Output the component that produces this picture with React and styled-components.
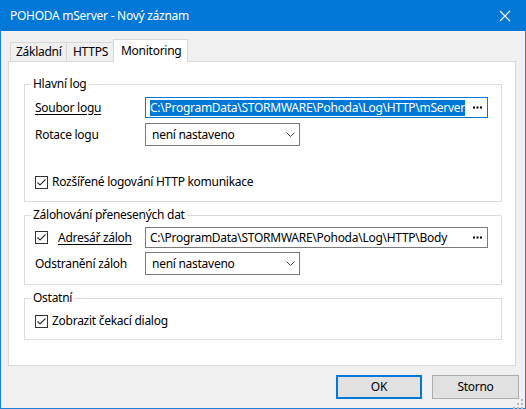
import React from "react";
import styled, { createGlobalStyle } from "styled-components";

const GlobalStyle = createGlobalStyle`
  html, body {
    margin: 0;
    padding: 0;
    background: #ffffff;
  }
  body {
    font-family: "Noto Sans", "Open Sans", sans-serif;
    font-size: 12px;
    letter-spacing: -0.27px;
    color: #000;
  }
  * {
    box-sizing: border-box;
  }
`;

const Window = styled.div`
  width: 526px;
  height: 409px;
  display: flex;
  flex-direction: column;
  position: relative;
`;

const TitleBar = styled.div`
  height: 31px;
  flex: 0 0 31px;
  background: #0078d7;
  color: #fff;
  display: flex;
  align-items: center;
  justify-content: space-between;
  padding: 1px 10px 0 10px;
`;

const Title = styled.span`
  font-size: 12px;
  line-height: 16px;
`;

const CloseIcon = () => (
  <svg width="12" height="12" viewBox="0 0 12 12" style={{ marginRight: 5 }}>
    <path d="M1 1 L11 11 M11 1 L1 11" stroke="#fff" strokeWidth="1.1" fill="none" />
  </svg>
);

const Body = styled.div`
  flex: 1;
  background: #f0f0f0;
  border: 1px solid #1a82d9;
  border-top: none;
  display: flex;
  flex-direction: column;
  padding: 8px 0 9px 7px;
`;

const TabStrip = styled.div`
  height: 22px;
  display: flex;
  align-items: flex-end;
  padding-left: 2px;
  position: relative;
  z-index: 1;
`;

const Tab = styled.div`
  width: ${(p) => p.$w}px;
  height: ${(p) => (p.$active ? 23 : 19)}px;
  margin-bottom: ${(p) => (p.$active ? -1 : 0)}px;
  margin-left: ${(p) => (p.$first ? 0 : -1)}px;
  background: ${(p) => (p.$active ? "#ffffff" : "#f0f0f0")};
  border: 1px solid #d9d9d9;
  border-bottom: none;
  padding-left: ${(p) => p.$pl}px;
  padding-top: ${(p) => (p.$active ? 3 : 1)}px;
  line-height: 16px;
  white-space: nowrap;
`;

const Panel = styled.div`
  width: 508px;
  flex: 1;
  background: #fff;
  border: 1px solid #d9d9d9;
  padding: 22px 13px 0 15px;
  display: flex;
  flex-direction: column;
  gap: 13px;
`;

const Group = styled.div`
  position: relative;
  border: 1px solid #dcdcdc;
  padding: ${(p) => p.$pad};
`;

const Caption = styled.span`
  position: absolute;
  left: 6px;
  top: -9px;
  padding: 0 2px;
  background: #fff;
  line-height: 16px;
`;

const FieldRow = styled.div`
  display: grid;
  grid-template-columns: 110px 1fr;
  align-items: center;
  margin-top: ${(p) => p.$mt || 0}px;
`;

const Label = styled.span`
  line-height: 16px;
  text-decoration: ${(p) => (p.$u ? "underline" : "none")};
  text-underline-offset: 2px;
  white-space: nowrap;
`;

const LabelWithCheck = styled.div`
  display: flex;
  align-items: center;
  gap: 10px;
`;

const PathInput = styled.div`
  height: 21px;
  border: 1px solid ${(p) => (p.$focus ? "#0078d7" : "#7a7a7a")};
  background: #fff;
  display: flex;
  align-items: center;
  padding-left: 4px;
`;

const PathText = styled.span`
  flex: 1;
  line-height: 16px;
  white-space: nowrap;
  overflow: hidden;
  span {
    background: ${(p) => (p.$selected ? "#0078d7" : "transparent")};
    color: ${(p) => (p.$selected ? "#fff" : "#000")};
  }
`;

const DotsButton = styled.span`
  width: 19px;
  height: 19px;
  display: flex;
  align-items: center;
  justify-content: center;
`;

const Dots = () => (
  <svg width="9" height="3" viewBox="0 0 9 3">
    <rect x="0" y="0.5" width="2" height="2" fill="#000" />
    <rect x="3.5" y="0.5" width="2" height="2" fill="#000" />
    <rect x="7" y="0.5" width="2" height="2" fill="#000" />
  </svg>
);

const Select = styled.div`
  width: 155px;
  height: 23px;
  border: 1px solid #7a7a7a;
  background: #fff;
  display: flex;
  align-items: center;
  justify-content: space-between;
  padding: 0 4px 0 6px;
  line-height: 16px;
`;

const Chevron = () => (
  <svg width="9" height="5" viewBox="0 0 9 5">
    <path d="M0.5 0.5 L4.5 4.5 L8.5 0.5" stroke="#444" strokeWidth="1" fill="none" />
  </svg>
);

const CheckRow = styled.label`
  display: flex;
  align-items: center;
  gap: 4px;
  height: 14px;
  margin-top: ${(p) => p.$mt || 0}px;
  line-height: 16px;
  white-space: nowrap;
`;

const Box = styled.span`
  width: 13px;
  height: 13px;
  flex: 0 0 13px;
  border: 1px solid #333;
  background: #fff;
  display: flex;
  align-items: center;
  justify-content: center;
`;

const Check = () => (
  <Box>
    <svg width="11" height="11" viewBox="0 0 11 11">
      <path d="M1.5 5.5 L4 8 L9.5 2.5" stroke="#333" strokeWidth="1.1" fill="none" />
    </svg>
  </Box>
);

const Footer = styled.div`
  margin-top: 9px;
  display: flex;
  justify-content: flex-end;
  gap: 10px;
  padding-right: 6px;
`;

const Button = styled.div`
  width: ${(p) => p.$w}px;
  height: 24px;
  background: #e1e1e1;
  border: ${(p) => (p.$default ? "2px solid #0078d7" : "1px solid #adadad")};
  display: flex;
  align-items: center;
  justify-content: center;
  line-height: 16px;
`;

const Grip = styled.div`
  position: absolute;
  right: 3px;
  bottom: 3px;
  width: 10px;
  height: 10px;
`;

const GripIcon = () => (
  <svg width="10" height="10" viewBox="0 0 10 10">
    {[
      [8, 0],
      [4, 4],
      [8, 4],
      [0, 8],
      [4, 8],
      [8, 8],
    ].map(([x, y]) => (
      <rect key={x + "-" + y} x={x} y={y} width="2" height="2" fill="#b8b8b8" />
    ))}
  </svg>
);

export default function App() {
  return (
    <>
      <GlobalStyle />
      <Window>
        <TitleBar>
          <Title>POHODA mServer - Nový záznam</Title>
          <CloseIcon />
        </TitleBar>
        <Body>
          <TabStrip>
            <Tab $first $w={57} $pl={5}>Základní</Tab>
            <Tab $w={48} $pl={6}>HTTPS</Tab>
            <Tab $active $w={75} $pl={7}>Monitoring</Tab>
          </TabStrip>
          <Panel>
            <Group $pad="12px 13px 12px 10px">
              <Caption>Hlavní log</Caption>
              <FieldRow>
                <Label $u>Soubor logu</Label>
                <PathInput $focus>
                  <PathText $selected>
                    <span>C:\ProgramData\STORMWARE\Pohoda\Log\HTTP\mServer</span>
                  </PathText>
                  <DotsButton>
                    <Dots />
                  </DotsButton>
                </PathInput>
              </FieldRow>
              <FieldRow $mt={5}>
                <Label>Rotace logu</Label>
                <Select>
                  <span>není nastaveno</span>
                  <Chevron />
                </Select>
              </FieldRow>
              <CheckRow $mt={29}>
                <Check />
                Rozšířené logování HTTP komunikace
              </CheckRow>
            </Group>

            <Group $pad="11px 13px 9px 10px">
              <Caption>Zálohování přenesených dat</Caption>
              <FieldRow>
                <LabelWithCheck>
                  <Check />
                  <Label $u>Adresář záloh</Label>
                </LabelWithCheck>
                <PathInput>
                  <PathText>
                    <span>C:\ProgramData\STORMWARE\Pohoda\Log\HTTP\Body</span>
                  </PathText>
                  <DotsButton>
                    <Dots />
                  </DotsButton>
                </PathInput>
              </FieldRow>
              <FieldRow $mt={4}>
                <Label>Odstranění záloh</Label>
                <Select>
                  <span>není nastaveno</span>
                  <Chevron />
                </Select>
              </FieldRow>
            </Group>

            <Group $pad="15px 13px 11px 10px">
              <Caption>Ostatní</Caption>
              <CheckRow>
                <Check />
                Zobrazit čekací dialog
              </CheckRow>
            </Group>
          </Panel>
          <Footer>
            <Button $default $w={86}>OK</Button>
            <Button $w={87}>Storno</Button>
          </Footer>
        </Body>
        <Grip>
          <GripIcon />
        </Grip>
      </Window>
    </>
  );
}
